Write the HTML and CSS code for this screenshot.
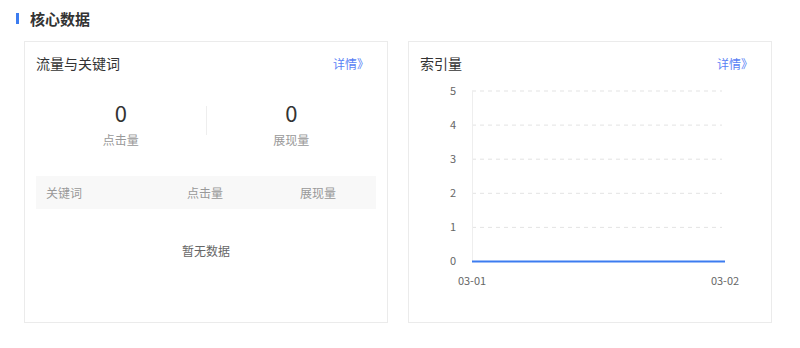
FILE: index.html
```html
<!DOCTYPE html>
<html lang="zh-CN">
<head>
<meta charset="utf-8">
<link rel="stylesheet" href="styles.css">
</head>
<body>

<h3 class="section_title">核心数据</h3>

<div class="cards">

<div class="card">
    <div class="card_head">
        <span class="card_title">流量与关键词</span>
        <a class="more" href="#">详情》</a>
    </div>
    <div class="stats">
        <div class="stat">
            <div class="stat_num">0</div>
            <div class="stat_label">点击量</div>
        </div>
        <div class="stat_split"></div>
        <div class="stat">
            <div class="stat_num">0</div>
            <div class="stat_label">展现量</div>
        </div>
    </div>
    <div class="table_head">
        <span class="col_word">关键词</span>
        <span class="col_click">点击量</span>
        <span class="col_show">展现量</span>
    </div>
    <div class="empty">暂无数据</div>
</div>

<div class="card">
    <div class="card_head">
        <span class="card_title">索引量</span>
        <a class="more" href="#">详情》</a>
    </div>
    <svg class="chart" width="340" height="220" viewBox="0 0 340 220">
        <g class="grid">
            <line x1="52" y1="17" x2="302" y2="17"/>
            <line x1="52" y1="51.1" x2="302" y2="51.1"/>
            <line x1="52" y1="85.2" x2="302" y2="85.2"/>
            <line x1="52" y1="119.3" x2="302" y2="119.3"/>
            <line x1="52" y1="153.4" x2="302" y2="153.4"/>
        </g>
        <line class="axis" x1="52.5" y1="17" x2="52.5" y2="187"/>
        <g class="ylabels">
            <text x="36" y="21">5</text>
            <text x="36" y="55">4</text>
            <text x="36" y="89">3</text>
            <text x="36" y="123">2</text>
            <text x="36" y="157">1</text>
            <text x="36" y="191">0</text>
        </g>
        <line class="series" x1="52" y1="187.5" x2="305" y2="187.5"/>
        <g class="xlabels">
            <text x="52" y="211">03-01</text>
            <text x="305" y="211">03-02</text>
        </g>
    </svg>
</div>

</div>

</body>
</html>
```

FILE: styles.css
```css
body
{
margin: 0;
background: #fff;
font-family: "Noto Sans CJK SC", "Noto Sans", sans-serif;
color: #333;
}

.section_title
{
margin: 0;
padding: 7px 0 2px 16px;
height: 32px;
box-sizing: border-box;
display: flex;
align-items: center;
font-size: 15px;
line-height: 20px;
font-weight: bold;
color: #333;
}

.section_title::before
{
content: "";
width: 3px;
height: 11px;
background: #3c7cf0;
margin-right: 11px;
}

.cards
{
display: flex;
gap: 20px;
margin-top: 9px;
margin-left: 24px;
}

.card
{
width: 364px;
height: 282px;
box-sizing: border-box;
border: 1px solid #ebebeb;
padding: 11px 11px;
}

.card_head
{
display: flex;
justify-content: space-between;
align-items: center;
height: 20px;
}

.card_title
{
font-size: 14px;
color: #333;
}

.more
{
font-size: 12px;
color: #5a7ff5;
text-decoration: none;
margin-right: 7px;
}

.stats
{
display: flex;
margin-top: 27px;
}

.stat
{
flex: 1;
text-align: center;
}

.stat_num
{
font-size: 22px;
line-height: 24px;
color: #333;
}

.stat_label
{
margin-top: 7px;
font-size: 12px;
line-height: 18px;
color: #999;
}

.stat_split
{
width: 1px;
height: 29px;
margin-top: 6px;
background: #eee;
}

.table_head
{
display: grid;
grid-template-columns: 129px 80px 1fr;
align-items: center;
height: 33px;
margin-top: 27px;
background: #f8f8f8;
font-size: 12px;
color: #999;
}

.col_word
{
padding-left: 10px;
}

.col_click
{
text-align: center;
}

.col_show
{
text-align: center;
padding-left: 15px;
}

.empty
{
margin-top: 33px;
text-align: center;
font-size: 12px;
line-height: 18px;
color: #666;
}

.chart
{
display: block;
margin-top: 1px;
}

.grid line
{
stroke: #e3e3e3;
stroke-width: 1;
stroke-dasharray: 4 4;
}

.axis
{
stroke: #eee;
stroke-width: 1;
}

.series
{
stroke: #3c7cf0;
stroke-width: 2;
}

.ylabels text
{
font-size: 11px;
fill: #666;
text-anchor: end;
}

.xlabels text
{
font-size: 11px;
fill: #666;
text-anchor: middle;
}
```
